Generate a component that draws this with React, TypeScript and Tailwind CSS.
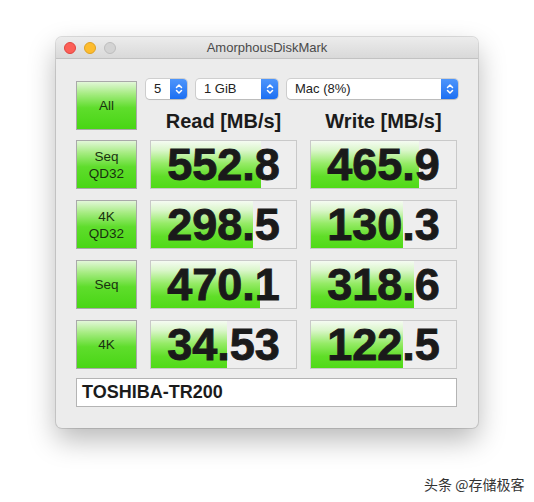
import React from 'react';

const rows = [
  { label: ['Seq', 'QD32'], read: '552.8', readW: 110, write: '465.9', writeW: 108 },
  { label: ['4K', 'QD32'], read: '298.5', readW: 102, write: '130.3', writeW: 92 },
  { label: ['Seq'], read: '470.1', readW: 109, write: '318.6', writeW: 103 },
  { label: ['4K'], read: '34.53', readW: 76, write: '122.5', writeW: 92 },
];

function Stepper() {
  return (
    <div className="w-[17px] h-full rounded-r-[4px] bg-gradient-to-b from-[#4d95fb] to-[#1b6ff2] flex items-center justify-center">
      <svg width="8" height="12" viewBox="0 0 8 12" fill="none" stroke="white" strokeWidth="1.5" strokeLinecap="round" strokeLinejoin="round">
        <path d="M1.5 4.5 L4 2 L6.5 4.5" />
        <path d="M1.5 7.5 L4 10 L6.5 7.5" />
      </svg>
    </div>
  );
}

function Select({ value, width }: { value: string; width: string }) {
  return (
    <div className={`${width} h-[20px] flex items-stretch bg-white rounded-[4px] shadow-[0_0_0_1px_rgba(0,0,0,0.12),0_1px_1px_rgba(0,0,0,0.1)]`}>
      <div className="flex-1 pl-[8px] text-[13px] leading-[20px] text-[#222]">{value}</div>
      <Stepper />
    </div>
  );
}

function GreenButton({ lines, className = '' }: { lines: string[]; className?: string }) {
  return (
    <div
      className={`w-[61px] h-[49px] border border-[#a9a9a9] bg-[linear-gradient(to_bottom,#e2f7d8_0%,#a6ec82_25%,#5fdd2c_55%,#48d614_100%)] flex flex-col items-center justify-center text-[13.5px] leading-[17px] text-[#183210] ${className}`}
    >
      {lines.map((l) => (
        <span key={l}>{l}</span>
      ))}
    </div>
  );
}

function ValueBox({ value, fill }: { value: string; fill: number }) {
  return (
    <div className="relative w-[147px] h-[49px] border border-[#c9c9c9] bg-[#eeeeee]">
      <div
        className="absolute left-0 top-0 bottom-0 bg-[linear-gradient(to_bottom,#f5fbf2_0%,#daf6ca_20%,#95eb66_48%,#60de28_75%,#50da18_100%)]"
        style={{ width: fill }}
      />
      <div className="relative h-full flex items-center justify-center text-[45px] leading-none font-bold text-[#1a1a1a] [-webkit-text-stroke:0.9px_#1a1a1a]">
        {value}
      </div>
    </div>
  );
}

export default function App() {
  return (
    <div className="relative min-h-[502px] bg-white pt-[37px] pl-[56px] font-['Liberation_Sans',Arial,sans-serif]">
      <div className="w-[422px] rounded-[6px] bg-[#ececec] shadow-[0_0_0_1px_rgba(0,0,0,0.12),0_12px_28px_rgba(0,0,0,0.28)] overflow-hidden">
        <div className="relative h-[22px] flex items-center justify-center bg-gradient-to-b from-[#ececec] to-[#d9d9d9] border-b border-[#c2c2c2]">
          <div className="absolute left-[8px] top-[5px] flex gap-[8px]">
            <div className="w-[12px] h-[12px] rounded-full bg-[#fc5f57] border border-[#e0443e]" />
            <div className="w-[12px] h-[12px] rounded-full bg-[#fdbc2e] border border-[#dea123]" />
            <div className="w-[12px] h-[12px] rounded-full bg-[#d3d3d3] border border-[#bdbdbd]" />
          </div>
          <span className="text-[13px] text-[#4a4a4a]">AmorphousDiskMark</span>
        </div>

        <div className="pt-[20px] pl-[20px] pb-[21px] flex flex-col">
          <div className="h-[51px] flex gap-[9px]">
            <GreenButton lines={['All']} className="mt-[2px]" />
            <div className="flex flex-col">
              <div className="flex gap-[9px]">
                <Select value="5" width="w-[41px]" />
                <Select value="1 GiB" width="w-[82px]" />
                <Select value="Mac (8%)" width="w-[171px]" />
              </div>
              <div className="mt-[12px] pl-[4px] flex gap-[13px] text-[20px] leading-[20px] font-bold text-[#1b1b1b]">
                <div className="w-[147px] text-center">Read [MB/s]</div>
                <div className="w-[147px] text-center">Write [MB/s]</div>
              </div>
            </div>
          </div>

          <div className="mt-[10px] flex flex-col gap-[11px]">
            {rows.map((r) => (
              <div key={r.read} className="flex gap-[13px]">
                <GreenButton lines={r.label} />
                <ValueBox value={r.read} fill={r.readW} />
                <ValueBox value={r.write} fill={r.writeW} />
              </div>
            ))}
          </div>

          <div className="mt-[9px] w-[381px] h-[29px] bg-white border border-[#b4b4b4] pl-[5px] flex items-center text-[18px] font-bold text-[#1b1b1b]">
            TOSHIBA-TR200
          </div>
        </div>
      </div>

      <div className="absolute left-[424px] top-[474px] text-[14px] text-[#333] font-['Noto_Sans_CJK_SC',sans-serif]">
        头条 @存储极客
      </div>
    </div>
  );
}
